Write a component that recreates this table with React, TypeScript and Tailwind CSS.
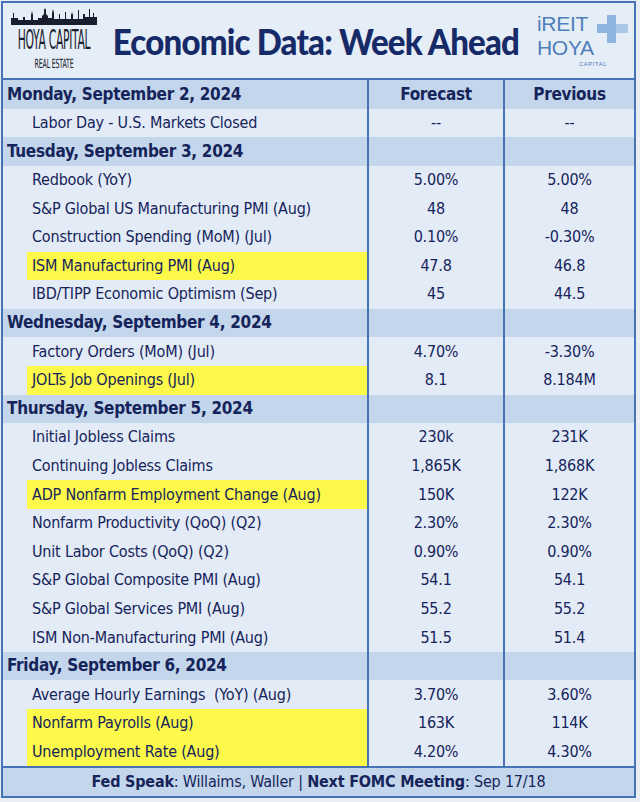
import { Fragment } from 'react'

type Row = { label: string; forecast: string; previous: string; hl?: boolean }
type Section = { day: string; rows: Row[] }

const SECTIONS: Section[] = [
    {
        day: 'Monday, September 2, 2024',
        rows: [{ label: 'Labor Day - U.S. Markets Closed', forecast: '--', previous: '--' }],
    },
    {
        day: 'Tuesday, September 3, 2024',
        rows: [
            { label: 'Redbook (YoY)', forecast: '5.00%', previous: '5.00%' },
            { label: 'S&P Global US Manufacturing PMI (Aug)', forecast: '48', previous: '48' },
            { label: 'Construction Spending (MoM) (Jul)', forecast: '0.10%', previous: '-0.30%' },
            { label: 'ISM Manufacturing PMI (Aug)', forecast: '47.8', previous: '46.8', hl: true },
            { label: 'IBD/TIPP Economic Optimism (Sep)', forecast: '45', previous: '44.5' },
        ],
    },
    {
        day: 'Wednesday, September 4, 2024',
        rows: [
            { label: 'Factory Orders (MoM) (Jul)', forecast: '4.70%', previous: '-3.30%' },
            { label: 'JOLTs Job Openings (Jul)', forecast: '8.1', previous: '8.184M', hl: true },
        ],
    },
    {
        day: 'Thursday, September 5, 2024',
        rows: [
            { label: 'Initial Jobless Claims', forecast: '230k', previous: '231K' },
            { label: 'Continuing Jobless Claims', forecast: '1,865K', previous: '1,868K' },
            { label: 'ADP Nonfarm Employment Change (Aug)', forecast: '150K', previous: '122K', hl: true },
            { label: 'Nonfarm Productivity (QoQ) (Q2)', forecast: '2.30%', previous: '2.30%' },
            { label: 'Unit Labor Costs (QoQ) (Q2)', forecast: '0.90%', previous: '0.90%' },
            { label: 'S&P Global Composite PMI (Aug)', forecast: '54.1', previous: '54.1' },
            { label: 'S&P Global Services PMI (Aug)', forecast: '55.2', previous: '55.2' },
            { label: 'ISM Non-Manufacturing PMI (Aug)', forecast: '51.5', previous: '51.4' },
        ],
    },
    {
        day: 'Friday, September 6, 2024',
        rows: [
            { label: 'Average Hourly Earnings\u00a0 (YoY) (Aug)', forecast: '3.70%', previous: '3.60%' },
            { label: 'Nonfarm Payrolls (Aug)', forecast: '163K', previous: '114K', hl: true },
            { label: 'Unemployment Rate (Aug)', forecast: '4.20%', previous: '4.30%', hl: true },
        ],
    },
]

const BODY_FONT = "font-['DejaVu_Sans_Condensed',Lato,sans-serif]"

const HoyaLogo = () => (
    <div className="flex flex-col items-center w-[88px] text-[#1a1d2e] font-['DejaVu_Sans_Condensed',Roboto,sans-serif]">
        <svg width="86" height="18" viewBox="0 0 86 18" fill="#1a1d2e">
            <path d="M0 17 L0 11 L2 11 L2 6 L3 6 L3 11 L7 11 L7 13 L12 13 L12 10 L14 10 L14 13 L20 13 L20 8 L21 4 L22 8 L22 13 L27 13 L27 11 L31 11 L31 9 L33 7 L33 3 L34 1 L35 3 L35 7 L37 9 L37 11 L41 11 L41 6 L42 2 L43 6 L43 12 L48 12 L48 7 L49 7 L49 12 L54 12 L54 5 L55 5 L55 12 L60 12 L60 8 L61 5 L62 8 L62 12 L67 12 L67 3 L68 3 L68 12 L72 12 L72 7 L74 7 L74 10 L78 10 L78 2 L79 2 L79 10 L82 10 L82 6 L83 6 L83 10 L86 10 L86 17 Z" />
            <rect x="0" y="16" width="86" height="2" />
        </svg>
        <div className="h-[32px] w-[88px] flex justify-center mt-[2px]">
            <span className="block h-[12px] text-[12px] leading-[12px] font-medium tracking-[-0.3px] scale-y-[2.2] origin-top whitespace-nowrap">
                HOYA CAPITAL
            </span>
        </div>
        <div className="h-[15px] w-[88px] flex justify-center">
            <span className="block h-[7px] text-[7px] leading-[7px] font-medium tracking-[-0.2px] scale-y-[1.8] origin-top whitespace-nowrap">
                REAL ESTATE
            </span>
        </div>
    </div>
)

const IreitLogo = () => (
    <div className="relative w-[94px] h-[60px]">
        <svg className="absolute left-[58px] top-[2px]" width="38" height="34" viewBox="0 0 38 34" fill="#8db5df">
            <path d="M12 2 H21 V11 H33 V20 H21 V30 H12 V20 H2 V11 H12 Z" />
            <path d="M21 11 L33 11 L33 20 L21 20 Z" fill="#a9c8e8" />
        </svg>
        <div className="relative font-['Liberation_Sans',Arial,sans-serif] text-[#4f7fba]">
            <div className="text-[21px] leading-[25px] tracking-[-0.3px]">iREIT</div>
            <div className="text-[21px] leading-[25px] tracking-[-0.3px] -mt-[1px]">HOYA</div>
            <div className="text-[6px] leading-[8px] tracking-[0.5px] pl-[42px]">CAPITAL</div>
        </div>
    </div>
)

const DataRow = ({ row }: { row: Row }) => (
    <div className="flex h-[28.6px] bg-[#e3ebf6]">
        <div className="w-[366px] border-r-2 border-[#4672b6] flex items-stretch pl-[24px]">
            <div className={`flex-1 flex items-center pl-[5px] ${row.hl ? 'bg-[#fdf94a]' : ''}`}>{row.label}</div>
        </div>
        <div className="w-[136px] border-r-2 border-[#4672b6] flex items-center justify-center">{row.forecast}</div>
        <div className="flex-1 flex items-center justify-center">{row.previous}</div>
    </div>
)

const SectionRow = ({ day, first }: { day: string; first: boolean }) => (
    <div className="flex h-[28.6px] bg-[#c4d6eb] font-bold text-[17px] tracking-[-0.3px]">
        <div className="w-[366px] border-r-2 border-[#4672b6] flex items-center pl-[4px]">{day}</div>
        <div className="w-[136px] border-r-2 border-[#4672b6] flex items-center justify-center">{first ? 'Forecast' : ''}</div>
        <div className="flex-1 flex items-center justify-center">{first ? 'Previous' : ''}</div>
    </div>
)

export default function App() {
    return (
        <div className={`w-[640px] h-[802px] bg-[#e9eef5] pl-[1px] pt-[1px] pr-[4px] text-[#15245a] ${BODY_FONT}`}>
            <div className="border-2 border-[#4672b6] bg-[#e3ebf6]">
                <div className="h-[77px] flex items-center border-b-2 border-[#4672b6] bg-[#e5edf7] pl-[7px]">
                    <HoyaLogo />
                    <div className="ml-[12px] w-[412px] flex justify-center">
                        <h1 className="font-['Lato',sans-serif] font-black text-[33px] leading-[40px] tracking-[-0.8px] text-[#172a68] scale-y-[1.08]">
                            Economic Data: Week Ahead
                        </h1>
                    </div>
                    <div className="ml-[15px]">
                        <IreitLogo />
                    </div>
                </div>
                <div className="text-[16px] tracking-[-0.2px]">
                    {SECTIONS.map((s, i) => (
                        <Fragment key={s.day}>
                            <SectionRow day={s.day} first={i === 0} />
                            {s.rows.map((r) => (
                                <DataRow key={r.label} row={r} />
                            ))}
                        </Fragment>
                    ))}
                </div>
                <div className="h-[30px] border-t-2 border-[#4672b6] bg-[#c4d6eb] flex items-center justify-center text-[16px] tracking-[-0.2px]">
                    <span className="font-bold">Fed Speak</span>
                    <span>: Willaims, Waller |&nbsp;</span>
                    <span className="font-bold">Next FOMC Meeting</span>
                    <span>: Sep 17/18</span>
                </div>
            </div>
        </div>
    )
}
